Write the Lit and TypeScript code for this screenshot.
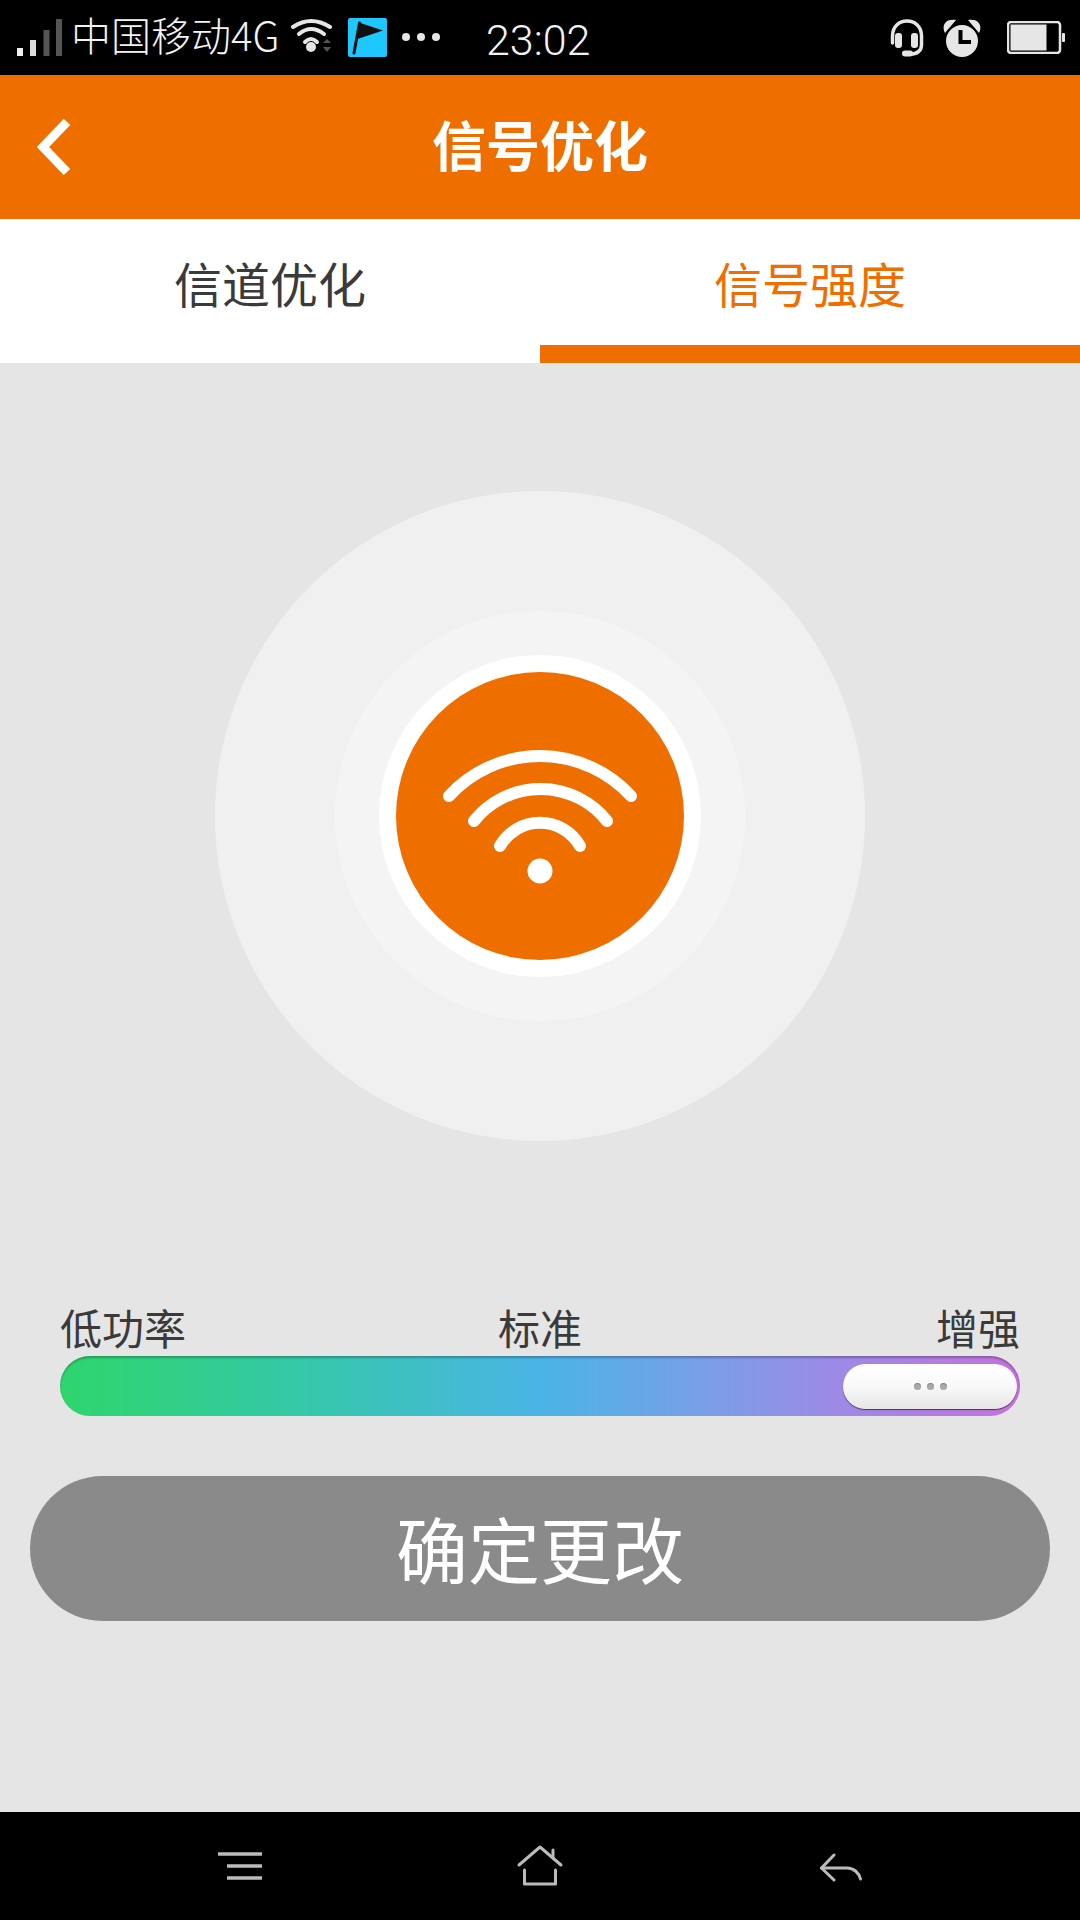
import { LitElement, css, html, svg } from "lit";
import { customElement } from "lit/decorators.js";

const signalIcon = html`<svg class="ic signal" width="46" height="38" viewBox="0 0 46 38">
  ${[
    [0, 29, "#f0f0f0"],
    [13, 21, "#dddddd"],
    [26.5, 11, "#555555"],
    [39, 0, "#555555"],
  ].map(([x, y, c]) => svg`<rect x=${x} y=${y} width="6" height=${37 - (y as number)} fill=${c}></rect>`)}
</svg>`;

const wifiSmall = html`<svg class="ic wifi-small" width="44" height="36" viewBox="0 0 44 36">
  <g fill="none" stroke="#e6e6e6" stroke-width="4" stroke-linecap="round">
    <path d="M3 9Q21 -3 40 9" />
    <path d="M9 16Q21 6 34 16" />
    <path d="M15 24Q21 18 27 24" />
  </g>
  <circle cx="21" cy="29" r="5" fill="#e6e6e6" />
  <path d="M33 25L41 25L37 21ZM33 29L41 29L37 34Z" fill="#555" />
</svg>`;

const flagIcon = html`<svg class="ic flag" width="39" height="39" viewBox="0 0 39 39">
  <rect width="39" height="39" rx="2" fill="#1ec8ff" />
  <path d="M11 4.5L35 12.5L9.5 21Z" fill="#111" />
  <path d="M11.5 5L6 35" stroke="#111" stroke-width="3" stroke-linecap="round" />
</svg>`;

const dotsIcon = html`<svg class="ic dots" width="40" height="10" viewBox="0 0 40 10">
  <circle cx="5" cy="5" r="4" fill="#e6e6e6" />
  <circle cx="20" cy="5" r="4" fill="#e6e6e6" />
  <circle cx="35" cy="5" r="4" fill="#e6e6e6" />
</svg>`;

const headsetIcon = html`<svg width="34" height="38" viewBox="0 0 34 38">
  <path
    d="M2.500 24V17C2.500 -3 31.500 -3 31.500 17V26C31.500 32 27 35 20 35"
    fill="none"
    stroke="#e6e6e6"
    stroke-width="3.500"
    stroke-linecap="round"
  />
  <rect x="5" y="14" width="7" height="15" rx="3" fill="#e6e6e6" />
  <rect x="21" y="14" width="7" height="15" rx="3" fill="#e6e6e6" />
  <rect x="12" y="31.500" width="11" height="6" rx="3" fill="#e6e6e6" />
</svg>`;

const alarmIcon = html`<svg width="40" height="38" viewBox="0 0 40 38">
  <path d="M3 14C-1 6 4 -1 14 1ZM37 14C41 6 36 -1 26 1Z" fill="#e6e6e6" />
  <circle cx="20" cy="22" r="17" fill="#e6e6e6" stroke="#000" stroke-width="2" />
  <path d="M18.500 11V23H29" fill="none" stroke="#000" stroke-width="4" />
</svg>`;

const batteryIcon = html`<svg width="58" height="33" viewBox="0 0 58 33">
  <rect x="1" y="1" width="52" height="31" rx="3" fill="none" stroke="#e6e6e6" stroke-width="2.5" />
  <rect x="3.5" y="3.5" width="36" height="26" fill="#e6e6e6" />
  <rect x="55" y="12" width="3" height="9" rx="1" fill="#e6e6e6" />
</svg>`;

const backIcon = html`<svg width="36" height="56" viewBox="0 0 36 56">
  <path d="M31 3L7 28L31 53" fill="none" stroke="#fff" stroke-width="9" />
</svg>`;

const wifiBig = html`<svg width="288" height="288" viewBox="0 0 288 288">
  <g fill="none" stroke="#fff" stroke-width="12" stroke-linecap="round">
    <path d="M53 124A123.500 123.500 0 0 1 235 124" />
    <path d="M78 149A85 85 0 0 1 211 149" />
    <path d="M104 174A46 46 0 0 1 184 174" />
  </g>
  <circle cx="144" cy="199" r="12.5" fill="#fff" />
</svg>`;

const menuIcon = html`<svg width="48" height="30" viewBox="0 0 48 30">
  <g stroke="#bbb" stroke-width="3.5">
    <path d="M2 3H46" />
    <path d="M11 15H46" />
    <path d="M11 27H46" />
  </g>
</svg>`;

const homeIcon = html`<svg width="52" height="46" viewBox="0 0 52 46">
  <g fill="none" stroke="#bbb" stroke-width="3" stroke-linecap="round" stroke-linejoin="round">
    <path d="M5 22L26 4L47 22" />
    <path d="M39 7V15" />
    <path d="M10.500 27V41H41.500V27" />
  </g>
</svg>`;

const navBackIcon = html`<svg width="48" height="32" viewBox="0 0 48 32">
  <g fill="none" stroke="#bbb" stroke-width="3" stroke-linecap="round" stroke-linejoin="round">
    <path d="M18 5L5.500 18L18 30" />
    <path d="M5.500 18H31C38 18 43 23 44.500 29" />
  </g>
</svg>`;

@customElement("app-root")
export class AppRoot extends LitElement {
  static styles = css`
    :host {
      display: block;
      width: 1080px;
      height: 1920px;
      font-family: "Noto Sans CJK SC", "Liberation Sans", sans-serif;
      background: #e5e5e5;
    }

    .page {
      display: flex;
      flex-direction: column;
      height: 1920px;
    }

    svg {
      display: block;
      flex: none;
    }

    .status {
      display: flex;
      align-items: center;
      height: 75px;
      background: #000;
      color: #f2f2f2;
      padding: 0 15px 0 17px;
      flex: none;
    }
    .signal {
      margin-right: 8px;
    }
    .carrier {
      font-size: 40px;
      font-weight: 300;
      width: 209px;
      white-space: nowrap;
      padding-bottom: 7px;
    }
    .wifi-small {
      margin-left: 10px;
      margin-top: -4px;
    }
    .flag {
      margin-left: 14px;
    }
    .dots {
      margin-left: 14px;
      margin-top: -2px;
    }
    .time {
      margin-left: 45px;
      font-family: Roboto, "Liberation Sans", sans-serif;
      font-weight: 300;
      font-size: 43px;
      padding-top: 5px;
    }
    .status-right {
      display: flex;
      align-items: center;
      margin-left: auto;
    }
    .headset {
      margin-right: 18px;
    }
    .alarm {
      margin-right: 25px;
    }

    .header {
      display: grid;
      grid-template-columns: 1fr auto 1fr;
      align-items: center;
      height: 144px;
      background: #ef6e00;
      color: #fff;
      flex: none;
    }
    .back {
      padding-left: 36px;
    }
    .title {
      font-size: 54px;
      font-weight: 700;
      padding-bottom: 7px;
    }

    .tabs {
      display: flex;
      height: 144px;
      background: #fff;
      flex: none;
    }
    .tab {
      flex: 1;
      display: flex;
      align-items: center;
      justify-content: center;
      font-size: 48px;
      color: #3a3a3a;
      border-bottom: 18px solid transparent;
    }
    .tab.active {
      color: #ef6e00;
      border-bottom-color: #ef6e00;
    }

    .content {
      flex: 1;
      display: flex;
      flex-direction: column;
      align-items: center;
      padding-top: 128px;
    }

    .circle {
      display: flex;
      align-items: center;
      justify-content: center;
      border-radius: 50%;
      flex: none;
    }
    .outer {
      width: 650px;
      height: 650px;
      background: #f0f0f0;
    }
    .middle {
      width: 410px;
      height: 410px;
      background: #f4f4f4;
    }
    .ring {
      width: 322px;
      height: 322px;
      background: #fff;
    }
    .core {
      width: 288px;
      height: 288px;
      background: #ef6e00;
    }

    .levels {
      width: 960px;
      margin-top: 157px;
      display: flex;
      flex-direction: column;
    }
    .labels {
      display: grid;
      grid-template-columns: 1fr auto 1fr;
      font-size: 42px;
      line-height: 58px;
      color: #3a3a3a;
    }
    .labels span:last-child {
      text-align: right;
    }
    .track {
      height: 60px;
      border-radius: 30px;
      background: linear-gradient(90deg, #2ed56c 0%, #35c8a8 25%, #4ab4e6 50%, #7c9ee6 68%, #a088e6 82%, #c473dc 100%);
      box-shadow: inset 0 2px 2px rgba(0, 0, 0, 0.25);
      display: flex;
      align-items: center;
      justify-content: flex-end;
      padding-right: 3px;
    }
    .knob {
      width: 174px;
      height: 45px;
      border-radius: 23px;
      background: linear-gradient(180deg, #fff 0%, #fafafa 45%, #e6e6e6 100%);
      box-shadow: 0 1px 1px rgba(40, 40, 40, 0.8);
      display: flex;
      align-items: center;
      justify-content: center;
      gap: 6px;
      margin-right: 0;
    }
    .knob span {
      width: 7px;
      height: 7px;
      border-radius: 50%;
      background: #aaa;
      box-shadow: inset 0 1px 1px rgba(0, 0, 0, 0.25);
    }

    .confirm {
      width: 1020px;
      height: 145px;
      margin-top: 60px;
      border-radius: 73px;
      background: #8a8a8a;
      color: #fff;
      font-size: 72px;
      padding-bottom: 5px;
      box-sizing: border-box;
      display: flex;
      align-items: center;
      justify-content: center;
    }

    .nav {
      display: grid;
      grid-template-columns: repeat(3, 300px);
      justify-content: center;
      justify-items: center;
      align-items: center;
      height: 108px;
      background: #000;
      flex: none;
    }
  `;

  render() {
    return html`
      <div class="page">
        <div class="status">
          ${signalIcon}
          <span class="carrier">中国移动4G</span>
          ${wifiSmall} ${flagIcon} ${dotsIcon}
          <span class="time">23:02</span>
          <div class="status-right">
            <div class="headset">${headsetIcon}</div>
            <div class="alarm">${alarmIcon}</div>
            ${batteryIcon}
          </div>
        </div>

        <div class="header">
          <div class="back">${backIcon}</div>
          <div class="title">信号优化</div>
        </div>

        <div class="tabs">
          <div class="tab">信道优化</div>
          <div class="tab active">信号强度</div>
        </div>

        <div class="content">
          <div class="circle outer">
            <div class="circle middle">
              <div class="circle ring">
                <div class="circle core">${wifiBig}</div>
              </div>
            </div>
          </div>

          <div class="levels">
            <div class="labels">
              <span>低功率</span>
              <span>标准</span>
              <span>增强</span>
            </div>
            <div class="track">
              <div class="knob"><span></span><span></span><span></span></div>
            </div>
          </div>

          <div class="confirm">确定更改</div>
        </div>

        <div class="nav">
          ${menuIcon} ${homeIcon} ${navBackIcon}
        </div>
      </div>
    `;
  }
}
